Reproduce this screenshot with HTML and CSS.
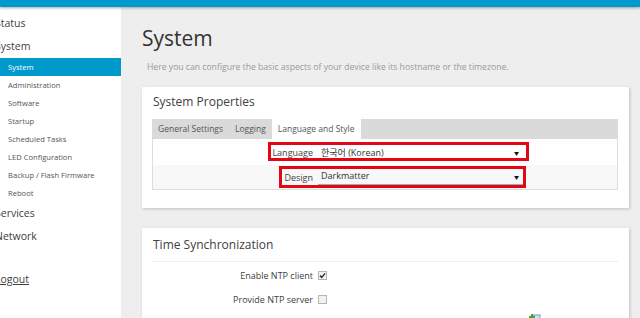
FILE: index.html
```html
<!DOCTYPE html>
<html lang="en">
<head>
  <meta charset="utf-8">
  <title>System - LuCI</title>
  <link rel="stylesheet" href="styles.css">
</head>
<body>

  <header class="topbar"></header>

  <div class="layout">
    <nav class="sidebar">
      <ul class="menu">
        <li class="menu-top">Status</li>
        <li class="menu-top">System</li>
        <li>
          <ul class="submenu">
            <li class="active">System</li>
            <li>Administration</li>
            <li>Software</li>
            <li>Startup</li>
            <li>Scheduled Tasks</li>
            <li>LED Configuration</li>
            <li>Backup / Flash Firmware</li>
            <li>Reboot</li>
          </ul>
        </li>
        <li class="menu-top">Services</li>
        <li class="menu-top">Network</li>
        <li class="menu-top logout"><a href="#">Logout</a></li>
      </ul>
    </nav>

    <main class="main">
      <h1 class="page-title">System</h1>
      <p class="page-desc">Here you can configure the basic aspects of your device like its hostname or the timezone.</p>

      <section class="card card-props">
        <h2 class="card-title">System Properties</h2>
        <div class="tabs">
          <span class="tab">General Settings</span>
          <span class="tab">Logging</span>
          <span class="tab active">Language and Style</span>
        </div>
        <div class="tab-body">
          <div class="row">
            <label class="row-label">Language</label>
            <div class="select">
              <span class="select-text">한국어 (Korean)</span>
              <span class="select-arrow">&#9660;</span>
            </div>
            <span class="mark mark-lang"></span>
          </div>
          <div class="row row-alt">
            <label class="row-label">Design</label>
            <div class="select select-focus">
              <span class="select-text">Darkmatter</span>
              <span class="select-arrow">&#9660;</span>
            </div>
            <span class="mark mark-design"></span>
          </div>
        </div>
      </section>

      <section class="card card-time">
        <h2 class="card-title">Time Synchronization</h2>
        <div class="time-body">
          <div class="row">
            <label class="row-label">Enable NTP client</label>
            <span class="check checked">
              <svg viewBox="0 0 9 9" width="9" height="9"><path d="M2 4.6 L3.8 6.4 L7 2.4" fill="none" stroke="#333" stroke-width="1.5"/></svg>
            </span>
          </div>
          <div class="row">
            <label class="row-label">Provide NTP server</label>
            <span class="check"></span>
          </div>
          <div class="row-icons">
            <svg class="add-icon" viewBox="0 0 12 12" width="12" height="12">
              <rect x="4" y="2" width="7" height="9" fill="#cfe3f3" stroke="#6a9ccc" stroke-width="1"/>
              <path d="M3 1 V7 M0 4 H6" stroke="#3aa63a" stroke-width="2"/>
            </svg>
          </div>
        </div>
      </section>
    </main>
  </div>

</body>
</html>
```

FILE: styles.css
```css
html, body {
  margin: 0;
  height: 318px;
  overflow: hidden;
}

body {
  font-family: "Open Sans", "Noto Sans", "Noto Sans CJK KR", sans-serif;
  color: #404040;
  background-color: #eeeeee;
}

.topbar {
  height: 7px;
  background-color: #0099cc;
  box-shadow: 0 1px 3px rgba(0, 0, 0, 0.35);
  position: relative;
  z-index: 2;
}

.layout {
  display: flex;
  height: 311px;
}

/* sidebar */

.sidebar {
  width: 121px;
  flex-shrink: 0;
  background-color: #ffffff;
  overflow: hidden;
}

.menu {
  list-style: none;
  margin: 0;
  padding: 5px 0 0 0;
}

.menu-top {
  height: 23px;
  line-height: 23px;
  font-size: 10.5px;
  color: #404040;
  margin-left: -5px;
}

.submenu {
  list-style: none;
  margin: 0;
  padding: 0;
}

.submenu li {
  height: 18px;
  line-height: 18px;
  font-size: 7.6px;
  color: #555555;
  padding-left: 8px;
}

.submenu li.active {
  background-color: #0099cc;
  color: #ffffff;
}

.logout {
  margin-top: 20px;
}

.logout a {
  color: #404040;
}

/* main */

.main {
  flex: 1;
  padding: 18px 11px 0 21px;
  background-color: #eeeeee;
}

.page-title {
  margin: 0;
  font-size: 21px;
  font-weight: normal;
  line-height: 26px;
  color: #333333;
}

.page-desc {
  margin: 9px 0 13px 5px;
  font-size: 8.65px;
  line-height: 14px;
  color: #999999;
}

.card {
  background-color: #ffffff;
  box-shadow: 1px 1px 3px rgba(0, 0, 0, 0.2);
  padding: 6px 11px 18px 10px;
}

.card-title {
  margin: 0 0 8px 1px;
  font-size: 12px;
  font-weight: normal;
  line-height: 18px;
  color: #404040;
}

.tabs {
  display: flex;
  height: 20px;
  background-color: #dadada;
}

.tab {
  line-height: 20px;
  font-size: 8.5px;
  padding: 0 6px;
  color: #555555;
}

.tab.active {
  background-color: #ffffff;
}

.tab-body {
  border: 1px solid #dddddd;
  border-top: none;
}

.row {
  position: relative;
  display: flex;
  align-items: center;
  height: 26px;
}

.row-alt {
  height: 24px;
  background-color: #f8f8f8;
}

.row-label {
  width: 160px;
  text-align: right;
  font-size: 9px;
  color: #404040;
}

.select {
  display: flex;
  align-items: center;
  margin-left: 5px;
  width: 207px;
  height: 15px;
  background-color: #ffffff;
  font-size: 9px;
}

.select-focus {
  background-color: #f5f9fb;
  border-bottom: 1px solid #9ab;
  align-items: flex-start;
}

.select-text {
  flex: 1;
  padding-left: 3px;
  color: #333333;
}

.select-arrow {
  font-size: 5px;
  color: #111111;
  padding-right: 6px;
}

.select-focus .select-arrow {
  align-self: center;
}

.mark {
  position: absolute;
  border: 3px solid #e30613;
  box-sizing: border-box;
}

.mark-lang {
  left: 115px;
  top: 3px;
  width: 261px;
  height: 19px;
}

.mark-design {
  left: 126px;
  top: 1px;
  width: 247px;
  height: 22px;
}

.card-time {
  margin-top: 20px;
  padding-top: 8px;
  height: 120px;
}

.card-time .card-title {
  margin-bottom: 7px;
}

.time-body {
  border-top: 1px solid #eeeeee;
  padding-top: 1px;
}

.card-time .row {
  height: 24px;
}

.card-time .row-label {
  width: 161px;
}

.check {
  display: flex;
  margin-left: 5px;
  width: 9px;
  height: 9px;
  box-sizing: border-box;
  border: 1px solid #b5b5b5;
  background-color: #f2f2f2;
}

.check.checked svg {
  margin: -1px;
}

.row-icons {
  display: flex;
  padding: 2px 0 0 377px;
}

.add-icon {
  display: block;
}
```
